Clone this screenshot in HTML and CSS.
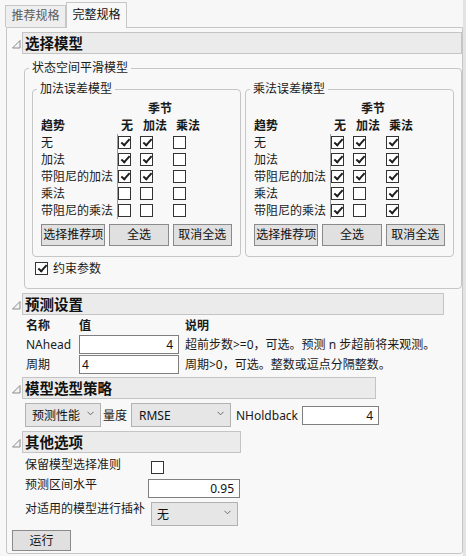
FILE: index.html
```html
<!DOCTYPE html>
<html lang="zh-CN">
<head>
<meta charset="utf-8">
<title>完整规格</title>
<link rel="stylesheet" href="styles.css">
</head>
<body>
<div class="app">
  <div class="tabs">
    <div class="tab">推荐规格</div>
    <div class="tab active">完整规格</div>
  </div>
  <div class="panel">
    <section class="sec">
      <div class="sec-head">
        <span class="twisty"><svg width="9" height="9" viewBox="0 0 9 9"><polygon points="8,0.5 8,8 0.5,8" fill="#f4f4f4" stroke="#8a8a8a" stroke-width="1"/></svg></span>
        <div class="sec-title w1">选择模型</div>
      </div>
      <fieldset class="group outer">
        <legend>状态空间平滑模型</legend>
        <div class="models">
          <fieldset class="group inner">
            <legend>加法误差模型</legend>
            <div class="mgrid">
              <div class="season">季节</div>
              <div class="hd lbl">趋势</div><div class="hd h1">无</div><div class="hd">加法</div><div class="hd">乘法</div>
              <div class="lbl">无</div><div class="cc c1"><span class="cb on"></span></div><div class="cc"><span class="cb on"></span></div><div class="cc"><span class="cb"></span></div>
              <div class="lbl">加法</div><div class="cc c1"><span class="cb on"></span></div><div class="cc"><span class="cb on"></span></div><div class="cc"><span class="cb"></span></div>
              <div class="lbl">带阻尼的加法</div><div class="cc c1"><span class="cb on"></span></div><div class="cc"><span class="cb on"></span></div><div class="cc"><span class="cb"></span></div>
              <div class="lbl">乘法</div><div class="cc c1"><span class="cb"></span></div><div class="cc"><span class="cb"></span></div><div class="cc"><span class="cb"></span></div>
              <div class="lbl">带阻尼的乘法</div><div class="cc c1"><span class="cb"></span></div><div class="cc"><span class="cb"></span></div><div class="cc"><span class="cb"></span></div>
            </div>
            <div class="btns">
              <button class="btn b-rec">选择推荐项</button>
              <button class="btn b-all">全选</button>
              <button class="btn b-none">取消全选</button>
            </div>
          </fieldset>
          <fieldset class="group inner">
            <legend>乘法误差模型</legend>
            <div class="mgrid">
              <div class="season">季节</div>
              <div class="hd lbl">趋势</div><div class="hd h1">无</div><div class="hd">加法</div><div class="hd">乘法</div>
              <div class="lbl">无</div><div class="cc c1"><span class="cb on"></span></div><div class="cc"><span class="cb on"></span></div><div class="cc"><span class="cb on"></span></div>
              <div class="lbl">加法</div><div class="cc c1"><span class="cb on"></span></div><div class="cc"><span class="cb on"></span></div><div class="cc"><span class="cb on"></span></div>
              <div class="lbl">带阻尼的加法</div><div class="cc c1"><span class="cb on"></span></div><div class="cc"><span class="cb on"></span></div><div class="cc"><span class="cb on"></span></div>
              <div class="lbl">乘法</div><div class="cc c1"><span class="cb on"></span></div><div class="cc"><span class="cb"></span></div><div class="cc"><span class="cb on"></span></div>
              <div class="lbl">带阻尼的乘法</div><div class="cc c1"><span class="cb on"></span></div><div class="cc"><span class="cb"></span></div><div class="cc"><span class="cb on"></span></div>
            </div>
            <div class="btns">
              <button class="btn b-rec">选择推荐项</button>
              <button class="btn b-all">全选</button>
              <button class="btn b-none">取消全选</button>
            </div>
          </fieldset>
        </div>
        <div class="constrain"><span class="cb on"></span><span>约束参数</span></div>
      </fieldset>
    </section>

    <section class="sec s2">
      <div class="sec-head">
        <span class="twisty"><svg width="9" height="9" viewBox="0 0 9 9"><polygon points="8,0.5 8,8 0.5,8" fill="#f4f4f4" stroke="#8a8a8a" stroke-width="1"/></svg></span>
        <div class="sec-title w2">预测设置</div>
      </div>
      <div class="fgrid">
        <div class="fh">名称</div><div class="fh">值</div><div class="fh">说明</div>
        <div class="fl">NAhead</div><div class="fv"><div class="inp right">4</div></div><div class="fl">超前步数&gt;=0，可选。预测 n 步超前将来观测。</div>
        <div class="fl">周期</div><div class="fv"><div class="inp left">4</div></div><div class="fl">周期&gt;0，可选。整数或逗点分隔整数。</div>
      </div>
    </section>

    <section class="sec s3">
      <div class="sec-head">
        <span class="twisty"><svg width="9" height="9" viewBox="0 0 9 9"><polygon points="8,0.5 8,8 0.5,8" fill="#f4f4f4" stroke="#8a8a8a" stroke-width="1"/></svg></span>
        <div class="sec-title w3">模型选型策略</div>
      </div>
      <div class="srow">
        <div class="sel sel-perf"><span>预测性能</span><svg width="7" height="5" viewBox="0 0 7 5"><path d="M0.5 0.8 L3.5 3.8 L6.5 0.8" fill="none" stroke="#6a6a6a" stroke-width="1"/></svg></div>
        <span class="lab-metric">量度</span>
        <div class="sel sel-rmse"><span>RMSE</span><svg width="7" height="5" viewBox="0 0 7 5"><path d="M0.5 0.8 L3.5 3.8 L6.5 0.8" fill="none" stroke="#6a6a6a" stroke-width="1"/></svg></div>
        <span class="lab-nh">NHoldback</span>
        <div class="inp right nh">4</div>
      </div>
    </section>

    <section class="sec s4">
      <div class="sec-head">
        <span class="twisty"><svg width="9" height="9" viewBox="0 0 9 9"><polygon points="8,0.5 8,8 0.5,8" fill="#f4f4f4" stroke="#8a8a8a" stroke-width="1"/></svg></span>
        <div class="sec-title w4">其他选项</div>
      </div>
      <div class="ogrid">
        <div class="ol">保留模型选择准则</div><div class="oc"><span class="cb keep"></span></div>
        <div class="ol">预测区间水平</div><div class="oc"><div class="inp right lvl">0.95</div></div>
        <div class="ol">对适用的模型进行插补</div><div class="oc"><div class="sel sel-imp"><span>无</span><svg width="7" height="5" viewBox="0 0 7 5"><path d="M0.5 0.8 L3.5 3.8 L6.5 0.8" fill="none" stroke="#6a6a6a" stroke-width="1"/></svg></div></div>
      </div>
    </section>

    <button class="btn run">运行</button>
  </div>
</div>
</body>
</html>
```
FILE: styles.css
```css
* { box-sizing: border-box; }

body {
  margin: 0;
  background: #e3e3e3;
  font-family: "Noto Sans", "Noto Sans CJK SC", sans-serif;
  font-size: 12px;
  line-height: 17px;
  color: #1a1a1a;
}

.app {
  width: 463px;
  height: 556px;
  background: #f7f7f7;
  overflow: hidden;
}

/* tabs */
.tabs {
  display: flex;
  align-items: flex-end;
  height: 27px;
  padding-left: 5px;
}
.tab {
  width: 61px;
  height: 22px;
  border: 1px solid #c6c6c6;
  border-bottom: none;
  background: #eeeeee;
  color: #5c5c5c;
  text-align: center;
  line-height: 20px;
}
.tab.active {
  height: 26px;
  margin-bottom: -1px;
  background: #f8f8f8;
  color: #111;
  line-height: 23px;
  position: relative;
}

/* panel */
.panel {
  margin-left: 6px;
  width: 457px;
  border: 1px solid #c6c6c6;
  border-radius: 0 0 3px 3px;
  background: #f8f8f8;
  padding: 4px 0 2px 0;
}

.sec-head {
  display: flex;
  align-items: center;
}
.twisty {
  width: 15px;
  height: 22px;
  padding-left: 5px;
  padding-top: 2px;
  display: flex;
  align-items: center;
}
.twisty svg { display: block; }
.sec-title {
  height: 22px;
  border: 1px solid #c4c4c4;
  background: #ebebeb;
  font-weight: 700;
  font-size: 14.5px;
  line-height: 20px;
  padding-left: 2px;
  color: #111;
}
.w1 { width: 440px; }
.w2 { width: 422px; }
.w3 { width: 354px; }
.w4 { width: 219px; }

/* group boxes */
fieldset.group {
  margin: 0;
  min-width: 0;
  border: 1px solid #c6c6c6;
  border-radius: 4px;
}
fieldset.group legend {
  line-height: 14px;
  padding: 0 3px;
  color: #1a1a1a;
}
.outer {
  margin: 7px 0 0 17px !important;
  width: 438px;
  padding: 7px 7px 11px 7px;
}
.outer > legend { margin-left: -3px; }
.models {
  display: grid;
  grid-template-columns: 1fr 1fr;
  column-gap: 4px;
}
.inner {
  padding: 4px 8px 10px 8px;
}
.inner > legend { margin-left: -4px; }

.mgrid {
  display: grid;
  grid-template-columns: 76px 23px 33px 30px;
  grid-auto-rows: 17px;
}
.season {
  grid-column: 2 / 5;
  text-align: center;
  font-weight: 700;
}
.hd { font-weight: 700; padding-left: 3px; }
.hd.lbl { padding-left: 0; }
.hd.h1 { padding-left: 4px; }
.lbl { white-space: nowrap; }
.cc {
  display: flex;
  align-items: center;
}
.c1 { border-left: 1px solid #9c9c9c; }

.cb {
  display: block;
  width: 13px;
  height: 13px;
  border: 1px solid #333;
  background: #fff;
  flex: none;
}
.cb.on::after {
  content: "";
  display: block;
  width: 3px;
  height: 7px;
  margin: 0 0 0 3.5px;
  border: solid #1e1e1e;
  border-width: 0 2px 2px 0;
  transform: rotate(42deg);
}

.btns {
  display: flex;
  gap: 4px;
  margin-top: 5px;
}
.btn {
  height: 22px;
  border: 1px solid #8a8a8a;
  background: #e0e0e0;
  font-family: inherit;
  font-size: 12px;
  line-height: 20px;
  color: #111;
  padding: 0;
  text-align: center;
}
.b-rec { width: 65px; }
.b-all { width: 60px; }
.b-none { width: 60px; }

.constrain {
  display: flex;
  align-items: center;
  gap: 5px;
  margin: 3px 0 0 3px;
  height: 17px;
}

/* forecast settings */
.s2 { margin-top: 4px; }
.fgrid {
  display: grid;
  grid-template-columns: 47px 100px auto;
  grid-template-rows: 18px 20px 20px;
  column-gap: 6px;
  margin: 2px 0 0 19px;
}
.fh { font-weight: 700; }
.fl { white-space: nowrap; line-height: 19px; }
.inp {
  height: 19px;
  border: 1px solid #7f7f7f;
  background: #fff;
  line-height: 17px;
  color: #111;
}
.inp.right { text-align: right; padding-right: 5px; }
.inp.left { text-align: left; padding-left: 2px; }

/* strategy */
.s3 { margin-top: 2px; }
.srow {
  display: flex;
  align-items: center;
  margin: 4px 0 0 18px;
  height: 24px;
}
.sel {
  height: 24px;
  border: 1px solid #b2b2b2;
  background: #e6e6e6;
  display: flex;
  align-items: center;
  justify-content: space-between;
  padding: 0 6px;
  color: #111;
}
.sel svg { display: block; margin-top: -3px; }
.sel-perf { width: 76px; }
.lab-metric { margin-left: 2px; width: 28px; }
.sel-rmse { width: 100px; padding-left: 7px; }
.lab-nh { margin-left: 5px; width: 66px; }
.nh { width: 77px; }

/* other options */
.s4 { margin-top: 4px; }
.ogrid {
  display: grid;
  grid-template-columns: 123px auto;
  row-gap: 2px;
  align-items: start;
  margin: 3px 0 0 18px;
}
.ol { white-space: nowrap; }
.oc { display: flex; }
.cb.keep { margin: 5px 0 0 3px; }
.lvl { width: 92px; margin-top: 3px; }
.sel-imp { width: 87px; margin: 2px 0 0 3px; padding-left: 5px; }

.run {
  display: block;
  width: 59px;
  height: 21px;
  line-height: 19px;
  margin: 4px 0 0 5px;
}
```
